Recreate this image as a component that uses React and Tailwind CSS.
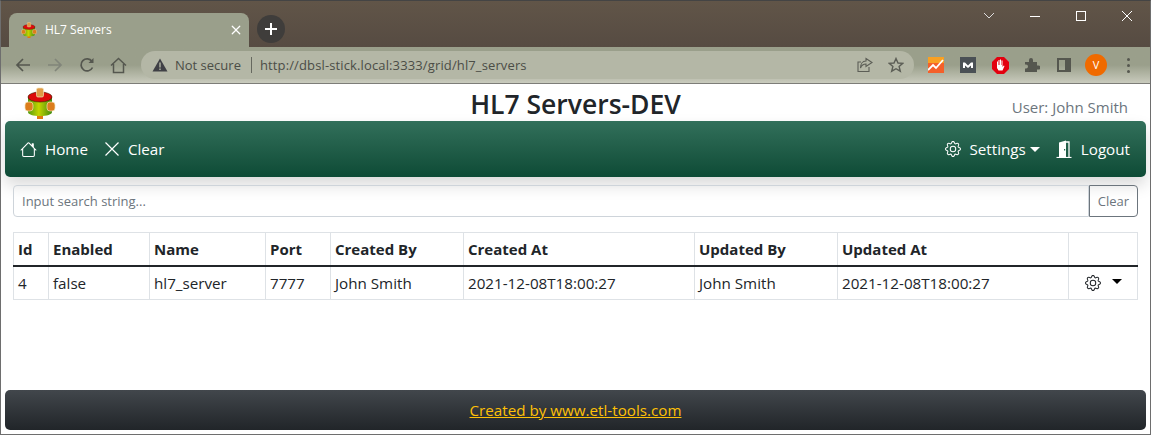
import React from "react";
import { BsHouse, BsX, BsGear } from "react-icons/bs";

const font = { fontFamily: '"Open Sans", sans-serif' };

const Logo = ({ size = 32 }) => (
  <svg width={size} height={size} viewBox="0 0 32 32">
    <defs>
      <linearGradient id="body" x1="0" x2="1" y1="0" y2="0">
        <stop offset="0" stopColor="#4f9a10" />
        <stop offset="0.45" stopColor="#c3d400" />
        <stop offset="1" stopColor="#3f8a10" />
      </linearGradient>
    </defs>
    <rect x="13" y="26" width="6" height="6" fill="#e07a10" />
    <path d="M4 10v15c0 2.500 5 4 12 4s12-1.500 12-4V10z" fill="url(#body)" />
    <rect x="1" y="15" width="8" height="9" rx="3" fill="#dc7d1c" stroke="#f4e3b5" strokeWidth="0.7" />
    <rect x="23" y="15" width="8" height="9" rx="3" fill="#dc7d1c" stroke="#f4e3b5" strokeWidth="0.7" />
    <ellipse cx="16" cy="10" rx="12" ry="5" fill="#dc0a0a" stroke="#3a1a00" strokeWidth="0.6" />
    <rect x="12.500" y="1" width="7" height="9" rx="1.500" fill="#de9a45" stroke="#f2e3b8" strokeWidth="0.7" />
  </svg>
);

const Door = () => (
  <svg width="16" height="18" viewBox="0 0 16 18">
    <path d="M0.500 17.500h15" stroke="#fff" strokeWidth="1.200" />
    <path d="M3 17V2.500L10 0.500V17z" fill="#fff" />
    <path d="M10 2h3v15" fill="none" stroke="#fff" strokeWidth="1.300" />
    <rect x="8" y="9" width="1.200" height="1.500" fill="#1f6a50" />
  </svg>
);

const Toolbar = () => (
  <div className="flex h-[37px] shrink-0 items-center bg-gradient-to-b from-[#9a9f8b] from-50% to-[#c9cbbd] border-b border-[#7d7d78]">
    <div className="flex w-[140px] shrink-0 items-center text-[#55574f]">
      <svg className="ml-[14px]" width="16" height="16" viewBox="0 0 16 16" fill="none" stroke="currentColor" strokeWidth="1.700">
        <path d="M15 8H2M8 2 2 8l6 6" />
      </svg>
      <svg className="ml-[16px] text-[#81857a]" width="16" height="16" viewBox="0 0 16 16" fill="none" stroke="currentColor" strokeWidth="1.700">
        <path d="M1 8h13M8 2l6 6-6 6" />
      </svg>
      <svg className="ml-[16px]" width="16" height="16" viewBox="0 0 16 16" fill="none" stroke="currentColor" strokeWidth="1.700">
        <path d="M13.500 10.500A6 6 0 1 1 13 4.500" />
        <path d="M14.500 1v5h-5z" fill="currentColor" stroke="none" />
      </svg>
      <svg className="ml-[15px]" width="17" height="17" viewBox="0 0 17 17" fill="none" stroke="currentColor" strokeWidth="1.500">
        <path d="M1 8.500 8.500 1.500 16 8.500M3.500 7v8.500h10V7" />
      </svg>
    </div>
    <div className="flex h-[28px] w-[773px] shrink-0 items-center rounded-full bg-[#b4b7a6] text-[13px] text-[#4b4d46]">
      <svg className="ml-[11px]" width="16" height="14" viewBox="0 0 16 14">
        <path d="M8 0.500 15.500 13.500H0.500z" fill="#3f4045" />
        <rect x="7.300" y="4.500" width="1.400" height="5" fill="#b4b7a6" />
        <rect x="7.300" y="10.500" width="1.400" height="1.500" fill="#b4b7a6" />
      </svg>
      <span className="ml-[7px] pt-[2px]">Not secure</span>
      <span className="ml-[10px] mr-[8px] h-[16px] w-px bg-[#66685f]" />
      <span className="pt-[2px] tracking-[0.13px]">http://dbsl-stick.local:3333/grid/hl7_servers</span>
      <div className="ml-auto mr-[10px] flex items-center gap-[15px] text-[#5c5e56]">
        <svg width="16" height="16" viewBox="0 0 16 16" fill="none" stroke="currentColor" strokeWidth="1.100">
          <path d="M9 1.500 15 5.500 9 9.500V7C6 7 4.500 8.500 3.500 11 3.500 7 5.500 4 9 4zM12 10v4.500H1V5h3" />
        </svg>
        <svg width="16" height="16" viewBox="0 0 16 16" fill="none" stroke="currentColor" strokeWidth="1.400">
          <path d="M8 1.500 10 6l4.800.400-3.700 3.100 1.200 4.700L8 11.700l-4.300 2.500 1.200-4.700L1.200 6.400 6 6z" />
        </svg>
      </div>
    </div>
    <div className="flex flex-1 items-center">
      <svg className="ml-[14px]" width="16" height="16" viewBox="0 0 16 16">
        <rect width="16" height="16" fill="#f4602a" />
        <path d="M0 0h16v6H0z" fill="#f9a022" />
        <path d="M0 13 5 8l3 3 7-8" fill="none" stroke="#fff" strokeWidth="1.800" />
      </svg>
      <svg className="ml-[16px]" width="16" height="16" viewBox="0 0 16 16">
        <rect width="16" height="16" fill="#4a5055" />
        <path d="M3 11V5.500h2l3 3 3-3h2V11h-2V8.500l-3 2.500-3-2.500V11z" fill="#fff" />
      </svg>
      <svg className="ml-[16px]" width="17" height="17" viewBox="0 0 17 17">
        <path d="M5 0h7l5 5v7l-5 5H5l-5-5V5z" fill="#e3000f" />
        <path d="M5 8V4.500h1V8h.5V3h1v5H8V2.500h1V8h.5V3.500h1V10l1.300-1.500.7.500-2 4.500H6.500L5 11z" fill="#fff" />
      </svg>
      <svg className="ml-[15px]" width="16" height="16" viewBox="0 0 16 16">
        <path d="M1 5h4V3a2 2 0 0 1 4 0v2h4v3.500h1.500a2 2 0 0 1 0 4H13V15H1v-3.500h1a2 2 0 0 0 0-4H1z" fill="#55574f" />
      </svg>
      <div className="ml-[17px] h-[14px] w-[14px] border-[2px] border-r-[6px] border-[#55574f]" />
      <div className="ml-[14px] flex h-[22px] w-[22px] items-center justify-center rounded-full bg-[#f06a00] text-[11px] text-white">V</div>
      <div className="ml-[20px] flex flex-col gap-[3px]">
        <span className="h-[3px] w-[3px] rounded-full bg-[#55574f]" />
        <span className="h-[3px] w-[3px] rounded-full bg-[#55574f]" />
        <span className="h-[3px] w-[3px] rounded-full bg-[#55574f]" />
      </div>
    </div>
  </div>
);

const cols = [
  ["Id", "4", "w-[35px]"],
  ["Enabled", "false", "w-[101px]"],
  ["Name", "hl7_server", "w-[116px]"],
  ["Port", "7777", "w-[65px]"],
  ["Created By", "John Smith", "w-[133px]"],
  ["Created At", "2021-12-08T18:00:27", "w-[231px]"],
  ["Updated By", "John Smith", "w-[143px]"],
  ["Updated At", "2021-12-08T18:00:27", "w-[231px]"],
];

const App = () => {
  return (
    <div className="flex h-[435px] w-[1151px] flex-col overflow-hidden border-x border-b border-t border-x-[#6e6e6e] border-b-[#6e6e6e] border-t-[#444] bg-white" style={font}>
      {/* Browser tabs */}
      <div className="flex h-[46px] shrink-0 items-end bg-gradient-to-b from-[#615548] to-[#564b42]">
        <div className="ml-[8px] flex h-[34px] w-[240px] items-center rounded-t-[8px] bg-[#9a9f8b] pl-[12px] text-[12px] text-white">
          <Logo size={16} />
          <span className="ml-[8px]">HL7 Servers</span>
          <BsX className="ml-auto mr-[3px] text-[20px]" />
        </div>
        <div className="mb-[4px] ml-[8px] flex h-[28px] w-[28px] items-center justify-center rounded-full bg-[#3f3d3b] text-[20px] leading-none text-white">
          <svg width="14" height="14" viewBox="0 0 14 14" stroke="#fff" strokeWidth="2"><path d="M7 1v12M1 7h12" /></svg>
        </div>
        <div className="mb-[26px] ml-auto flex items-center text-white">
          <svg width="12" height="8" viewBox="0 0 12 8" fill="none" stroke="#ddd" strokeWidth="1"><path d="M1 1l5 5 5-5" /></svg>
          <span className="ml-[35px] h-px w-[10px] bg-white" />
          <span className="ml-[36px] h-[10px] w-[10px] border border-white" />
          <svg className="ml-[36px] mr-[18px]" width="10" height="10" viewBox="0 0 10 10" stroke="#fff" strokeWidth="1"><path d="M0 0l10 10M10 0 0 10" /></svg>
        </div>
      </div>
      <Toolbar />

      {/* Page */}
      <div className="flex flex-1 flex-col px-[4px] pb-[4px] text-[#212529]">
        <div className="relative flex h-[37px] shrink-0 items-center justify-center">
          <div className="absolute left-[19px] top-[3px]"><Logo /></div>
          <h1 className="pt-[4px] text-[26.500px] font-semibold leading-none">HL7 Servers-DEV</h1>
          <span className="absolute right-[18px] top-[13px] text-[15px] leading-5 text-[#6c757d]">User: John Smith</span>
        </div>

        <nav className="flex h-[56px] shrink-0 items-center rounded-[5px] bg-gradient-to-b from-[#32705b] to-[#0d4b36] pl-[15px] pr-[16px] text-[15.200px] text-white shadow-[0_8px_16px_rgba(0,0,0,0.15)]">
          <BsHouse className="text-[17px]" />
          <span className="ml-[8px]">Home</span>
          <svg className="ml-[17px]" width="14" height="14" viewBox="0 0 14 14" stroke="#fff" strokeWidth="1.200"><path d="M0.500 0.500l13 13M13.500 0.500l-13 13" /></svg>
          <span className="ml-[9px]">Clear</span>
          <BsGear className="ml-auto text-[16px]" />
          <span className="ml-[8px]">Settings</span>
          <span className="ml-[4px] border-x-[5px] border-t-[5px] border-x-transparent border-t-white" />
          <span className="ml-[16px]"><Door /></span>
          <span className="ml-[9px]">Logout</span>
        </nav>

        <div className="mx-[8px] mt-[8px] flex h-[32px] shrink-0">
          <input
            placeholder="Input search string..."
            className="min-w-0 flex-1 rounded-l-[4px] border border-[#ced4da] px-[8px] pt-[2px] text-[13px] outline-none placeholder:text-[#6c757d]"
          />
          <button className="w-[49px] rounded-r-[4px] border border-[#6c757d] pt-[2px] text-[13px] text-[#6c757d]">Clear</button>
        </div>

        <table className="mx-[8px] mt-[15px] w-[1125px] table-fixed border-collapse text-[15.200px]">
          <thead>
            <tr className="h-[33px] border-b-2 border-b-[#212529]">
              {cols.map(([head, , w]) => (
                <th key={head} className={`${w} border border-[#dee2e6] border-b-[#212529] px-[4px] text-left text-[15px] font-bold`}>{head}</th>
              ))}
              <th className="border border-[#dee2e6] border-b-[#212529]" />
            </tr>
          </thead>
          <tbody>
            <tr className="h-[34px]">
              {cols.map(([head, val]) => (
                <td key={head} className="border border-[#dee2e6] px-[4px] pt-[2px]">{val}</td>
              ))}
              <td className="border border-[#dee2e6]">
                <div className="flex items-center pl-[16px]">
                  <BsGear className="text-[16px]" />
                  <span className="ml-[11px] mb-[2px] border-x-[5px] border-t-[5px] border-x-transparent border-t-black" />
                </div>
              </td>
            </tr>
          </tbody>
        </table>

        <footer className="mt-auto flex h-[40px] shrink-0 items-center justify-center rounded-[5px] bg-gradient-to-b from-[#42474c] to-[#212529] text-[15.200px]">
          <a className="text-[#ffc107] underline">Created by www.etl-tools.com</a>
        </footer>
      </div>
    </div>
  );
};

export default App;
